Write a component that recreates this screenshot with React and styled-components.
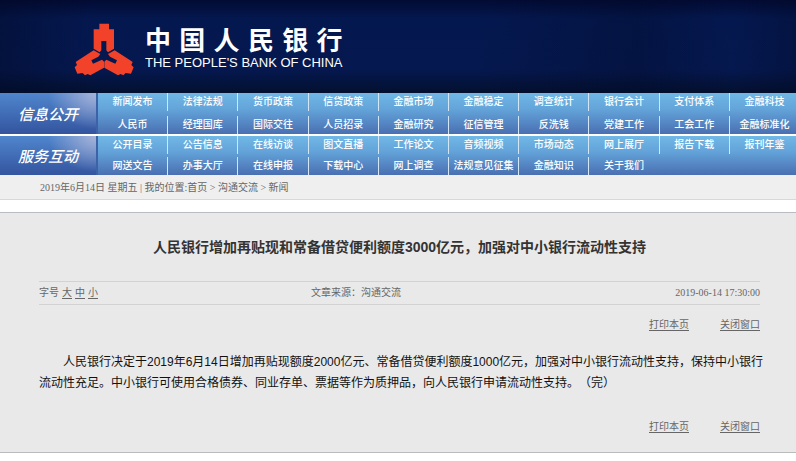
import React from "react";
import styled, { createGlobalStyle } from "styled-components";

const sans = '"Liberation Sans", "Noto Sans CJK SC", sans-serif';
const serif = '"Liberation Serif", "Noto Sans CJK SC", serif';

const GlobalStyle = createGlobalStyle`
  *, *::before, *::after { box-sizing: border-box; }
  body { margin: 0; background: #fff; font-family: ${serif}; font-size: 10px; color: #666; }
`;

const Page = styled.div`
  overflow-x: hidden;
`;

const Banner = styled.header`
  height: 93px;
  padding: 2px 0 0 65px;
  display: flex;
  align-items: center;
  background:
    linear-gradient(90deg, rgba(2, 8, 34, 0.4), transparent 12%, transparent 60%, rgba(2, 8, 34, 0.3) 80%, transparent 92%, rgba(2, 8, 34, 0.3)),
    linear-gradient(180deg, #020b33 0%, #041850 20%, #05184f 75%, #03102f 100%);
`;

const Emblem = styled.svg`
  width: 80px;
  height: 70px;
  flex: none;
`;

const BankName = styled.h1`
  margin: 0;
  color: #fff;
  font-family: ${sans};
  font-weight: 400;
`;

const ChineseName = styled.span`
  display: flex;
  justify-content: space-between;
  font-size: 26px;
  line-height: 30px;
  font-weight: 700;
`;

const EnglishName = styled.span`
  display: block;
  font-size: 13px;
  line-height: 14px;
`;

const Menu = styled.nav`
  display: grid;
  gap: 2px;
`;

const MenuGroup = styled.section`
  display: grid;
  grid-template-columns: 98px 1fr;
`;

const MenuTitle = styled.h2`
  margin: 0;
  padding-left: 18px;
  display: flex;
  align-items: center;
  color: #fff;
  font: italic 500 15px ${sans};
  background:
    linear-gradient(90deg, transparent 96px, #3c62a8 96px),
    radial-gradient(ellipse 50px 36px at 100% 0, #aab4d8, transparent),
    linear-gradient(180deg, #4f86cd, #34549f);
`;

const MenuGrid = styled.ul`
  list-style: none;
  margin: 0;
  padding: 0;
  width: calc(100% + 4px);
  display: grid;
  grid-template-columns: repeat(10, 1fr);
  row-gap: ${(p) => p.$gap}px;
  background: linear-gradient(180deg, #70b8e6 0%, #63a3d9 40%, #4a6fb2 100%);
`;

const MenuItem = styled.li`
  height: 18px;
  display: flex;
  align-items: center;
  justify-content: center;
  border-right: 1px solid ${(p) => (p.$last ? "transparent" : "#d3e6f6")};
`;

const MenuLink = styled.a`
  color: #fff;
  font: 500 10px/18px ${sans};
  text-decoration: none;
  white-space: nowrap;
`;

const Trail = styled.div`
  height: 25px;
  padding-left: 40px;
  line-height: 25px;
  background: #efefef;
  border-bottom: 1px solid #d8d8d8;
`;

const TrailLink = styled.a`
  color: inherit;
  text-decoration: none;
`;

const Article = styled.article`
  margin-top: 12px;
  padding: 23px 36px 18px 39px;
  background: #e9e9e9;
  border-top: 1px solid #b8bcc0;
  border-bottom: 1px solid #b8bcbc;
`;

const Title = styled.h2`
  margin: 0 0 23px;
  text-align: center;
  color: #333;
  font: 700 14px/22px ${sans};
`;

const Meta = styled.div`
  margin-bottom: 13px;
  display: grid;
  grid-template-columns: 272px 1fr auto;
  line-height: 22px;
  border-top: 1px solid #d2d2d2;
  border-bottom: 1px solid #d2d2d2;
`;

const Sizes = styled.div`
  display: flex;
  align-items: center;
  gap: 3px;
`;

const TextButton = styled.button`
  padding: 0;
  border: 0;
  background: none;
  color: #666;
  font: inherit;
  line-height: 14px;
  text-decoration: underline;
  text-underline-offset: 2px;
`;

const PublishTime = styled.time`
  text-align: right;
`;

const Actions = styled.div`
  display: flex;
  justify-content: flex-end;
  gap: 31px;
`;

const Body = styled.p`
  margin: 20px -4px 26px 0;
  color: #111;
  font: 12px/21px ${sans};
  text-indent: 24px;
  text-spacing-trim: space-all;
`;

const groups = [
  {
    title: "信息公开",
    gap: 5,
    items: [
      "新闻发布", "法律法规", "货币政策", "信贷政策", "金融市场", "金融稳定", "调查统计", "银行会计", "支付体系", "金融科技",
      "人民币", "经理国库", "国际交往", "人员招录", "金融研究", "征信管理", "反洗钱", "党建工作", "工会工作", "金融标准化",
    ],
  },
  {
    title: "服务互动",
    gap: 3,
    items: [
      "公开目录", "公告信息", "在线访谈", "图文直播", "工作论文", "音频视频", "市场动态", "网上展厅", "报告下载", "报刊年鉴",
      "网送文告", "办事大厅", "在线申报", "下载中心", "网上调查", "法规意见征集", "金融知识", "关于我们",
    ],
  },
];

const topCoin = "M103 32H132V49H147V107L129 118L124 112V84H109V112L104 118L86 107V49H103Z";
const sideCoin =
  "M86 112L106 123L100 131L79 142L84 152L111 140L117 146V164L76 187L68 183L60 187L53 180L37 182L29 163L36 156L32 147L42 140Z";

function ArticleActions() {
  return (
    <Actions>
      <TextButton type="button">打印本页</TextButton>
      <TextButton type="button">关闭窗口</TextButton>
    </Actions>
  );
}

export default function App() {
  return (
    <Page>
      <GlobalStyle />
      <Banner>
        <Emblem viewBox="0 0 240 210" aria-hidden="true" fill="#f2432a">
          <path d={topCoin} />
          <path d={sideCoin} />
          <path d={sideCoin} transform="translate(235 0) scale(-1 1)" />
        </Emblem>
        <BankName>
          <ChineseName>
            {[..."中国人民银行"].map((character) => (
              <span key={character}>{character}</span>
            ))}
          </ChineseName>
          <EnglishName lang="en">THE PEOPLE'S BANK OF CHINA</EnglishName>
        </BankName>
      </Banner>
      <Menu>
        {groups.map((group) => (
          <MenuGroup key={group.title}>
            <MenuTitle>{group.title}</MenuTitle>
            <MenuGrid $gap={group.gap}>
              {group.items.map((item, i) => (
                <MenuItem key={item} $last={i % 10 === 9 || i === group.items.length - 1}>
                  <MenuLink href="#">{item}</MenuLink>
                </MenuItem>
              ))}
            </MenuGrid>
          </MenuGroup>
        ))}
      </Menu>
      <Trail>
        2019年6月14日 星期五 | 我的位置:<TrailLink href="#">首页</TrailLink> &gt; <TrailLink href="#">沟通交流</TrailLink> &gt;{" "}
        <TrailLink href="#">新闻</TrailLink>
      </Trail>
      <Article>
        <Title>人民银行增加再贴现和常备借贷便利额度3000亿元，加强对中小银行流动性支持</Title>
        <Meta>
          <Sizes>
            字号
            <TextButton type="button">大</TextButton>
            <TextButton type="button">中</TextButton>
            <TextButton type="button">小</TextButton>
          </Sizes>
          <span>文章来源：沟通交流</span>
          <PublishTime>2019-06-14 17:30:00</PublishTime>
        </Meta>
        <ArticleActions />
        <Body>
          人民银行决定于2019年6月14日增加再贴现额度2000亿元、常备借贷便利额度1000亿元，加强对中小银行流动性支持，保持中小银行流动性充足。中小银行可使用合格债券、同业存单、票据等作为质押品，向人民银行申请流动性支持。（完）
        </Body>
        <ArticleActions />
      </Article>
    </Page>
  );
}
